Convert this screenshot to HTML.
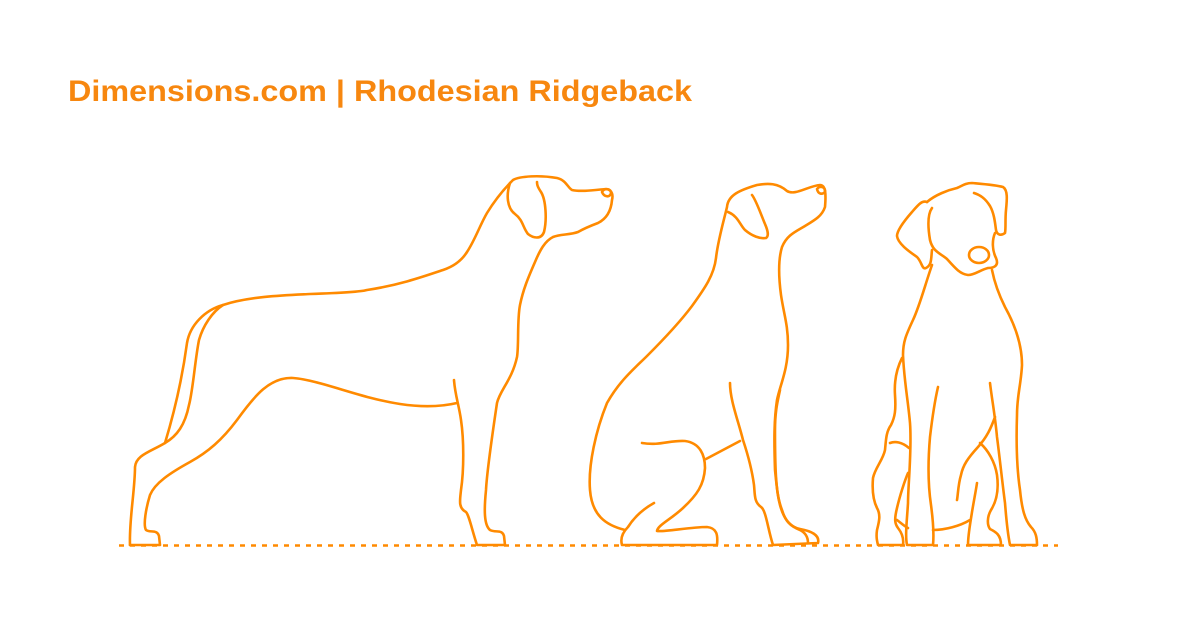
<!DOCTYPE html>
<html><head><meta charset="utf-8"><style>
html,body{margin:0;padding:0;background:#fff;}
svg{display:block}
</style></head><body>
<svg width="1200" height="630" viewBox="0 0 1200 630" xmlns="http://www.w3.org/2000/svg">
<text x="68" y="101" font-family="Liberation Sans, sans-serif" font-weight="bold" font-size="30" fill="#f7870f" textLength="624" lengthAdjust="spacingAndGlyphs">Dimensions.com | Rhodesian Ridgeback</text>
<g fill="none" stroke="#ff8a00" stroke-width="2.6" stroke-linecap="round" stroke-linejoin="round">
<line x1="119" y1="545.5" x2="1058" y2="545.5" stroke-dasharray="5 6" stroke-linecap="butt" stroke-width="2.6"/>
<!-- standing dog -->
<path d="M130,545 C129,520 135,490 135,467 C136,455 150,452 165,443 C175,410 182,380 187,343 C190,325 205,310 223,305 C250,296 290,295 310,294 C340,293 360,292 367,290 C400,285 425,276 443,270 C455,266 462,260 467,252 C475,240 480,225 487,213 C495,200 505,188 513,180 C520,176 540,175 557,178 C566,180 568,188 572,190 C580,192 595,190 606,189 C613,190 613,196 612,200 C611,212 606,219 598,223 C590,226 585,228 578,232 C570,235 560,234 553,237 C545,241 540,250 535,262 C528,278 523,290 520,305 C517,320 519,345 517,357 C512,380 500,390 497,403 C493,430 487,470 486,490 C484,510 484,525 490,530 C496,533 502,529 504,536 L505,545 L477,545 C472,530 469,515 466,512 C458,508 460,500 461,490 C464,470 464,440 461,420 C459,405 455,395 454,380"/>
<path d="M457,403 C440,407 420,407 400,404 C360,398 320,380 293,378 C270,377 255,395 237,420 C222,440 208,452 190,462 C170,473 155,483 150,495 C146,508 143,525 146,530 C150,533 157,529 159,536 L160,545 L130,545"/>
<path d="M223,305 C212,312 203,326 199,340 C195,360 193,390 189,405 C185,425 177,436 165,443"/>
<path d="M510,183 C506,195 507,208 515,214 C523,220 523,228 528,234 C533,238 541,240 544,232 C547,220 546,200 541,192 C537,186 537,184 537,182"/>
<path d="M602,192 C604,188 611,188 611,193 C610,198 604,197 602,192 Z"/>
<!-- sitting dog -->
<path d="M625,530 C605,525 592,515 590,490 C588,465 596,430 607,403 C620,380 635,368 647,356 C665,338 680,322 692,306 C705,288 714,275 716,258 C718,240 724,220 727,207 C728,195 740,190 757,185 C768,183 778,183 787,191 C795,196 808,186 820,185 C826,185 826,195 825,207 C822,216 815,220 805,226 C795,232 787,235 782,247 C778,260 779,280 781,295 C784,315 788,325 788,345 C788,370 780,385 777,400 C774,420 774,440 775,470 C777,490 778,500 782,510 C785,520 790,527 800,529 C811,531 820,535 818,543 L773,545 C768,530 766,510 761,507 C754,502 755,495 754,485 C752,470 748,455 743,440 C738,420 730,400 730,383"/>
<path d="M780,390 C778,400 775,410 775,430 C775,470 776,490 780,505 C784,520 790,526 800,530 C806,533 808,538 808,543"/>
<path d="M642,443 C660,446 670,440 685,441 C700,443 705,455 705,468 C704,485 697,495 683,508 C670,520 658,525 657,531 C665,532 690,527 707,527 C717,528 718,535 717,545 L622,545 C620,538 623,532 628,527 C635,516 645,508 654,503"/>
<path d="M706,459 L740,441"/>
<path d="M728,212 C738,216 740,225 745,230 C752,236 760,239 766,238 C769,236 768,231 765,224 C760,212 756,200 752,195"/>
<path d="M817,189 C820,185 826,187 825,192 C822,195 818,194 817,189 Z"/>
<!-- front dog -->
<path d="M927,202 C935,195 948,190 957,188 C962,186 965,183 972,183 C983,184 996,185 1003,187 C1008,190 1007,200 1006,210 C1005,220 1006,228 1005,233 C1001,236 997,235 996,230 C995,222 994,213 990,206 C985,198 980,195 974,193"/>
<path d="M995,233 C992,240 992,250 996,258 C999,265 995,268 988,268 C980,270 975,275 968,275 C960,274 955,268 947,259 C940,253 933,252 930,240 C928,228 927,215 932,208"/>
<path d="M927,202 C922,200 918,205 912,212 C905,220 897,230 897,236 C898,244 910,252 917,257 C922,262 922,270 926,268 C932,265 931,258 932,250"/>
<ellipse cx="979" cy="255" rx="10" ry="8"/>
<path d="M932,265 C925,285 920,305 913,320 C906,335 903,342 903,355 C904,380 908,400 910,423 C912,450 908,485 908,503 C907,520 905,535 907,545 L933,545 C934,535 933,520 931,505 C928,485 928,460 930,437 C932,420 935,400 938,387"/>
<path d="M992,270 C995,285 1000,297 1005,307 C1015,325 1022,345 1022,365 C1021,385 1017,395 1017,415 C1016,445 1017,470 1020,490 C1022,510 1025,520 1031,527 C1036,532 1037,538 1037,545 L1010,545 C1007,530 1006,515 1005,503 C1002,480 1000,460 997,437 C995,415 992,400 990,383"/>
<path d="M995,417 C991,428 987,437 978,447 C968,458 963,465 961,475 C958,485 958,495 957,500"/>
<path d="M980,443 C988,450 995,462 997,475 C999,490 996,502 991,510 C987,517 987,525 990,529 C996,532 1001,535 1001,545 L968,545 C968,535 970,525 972,512 C974,500 976,490 977,483"/>
<path d="M933,530 C945,530 960,526 970,520"/>
<path d="M902,358 C897,368 894,380 895,395 C896,410 895,417 891,425 C886,432 886,440 885,450 C883,460 875,468 873,478 C872,490 873,500 877,508 C881,515 879,522 877,530 C876,537 877,541 878,545 L903,545 C904,538 902,533 898,528 C895,524 894,520 897,508 C900,495 905,480 908,473"/>
<path d="M890,443 C895,441 902,442 909,448"/>
<path d="M897,520 C901,523 904,526 908,528"/>
</g>
</svg>
</body></html>
